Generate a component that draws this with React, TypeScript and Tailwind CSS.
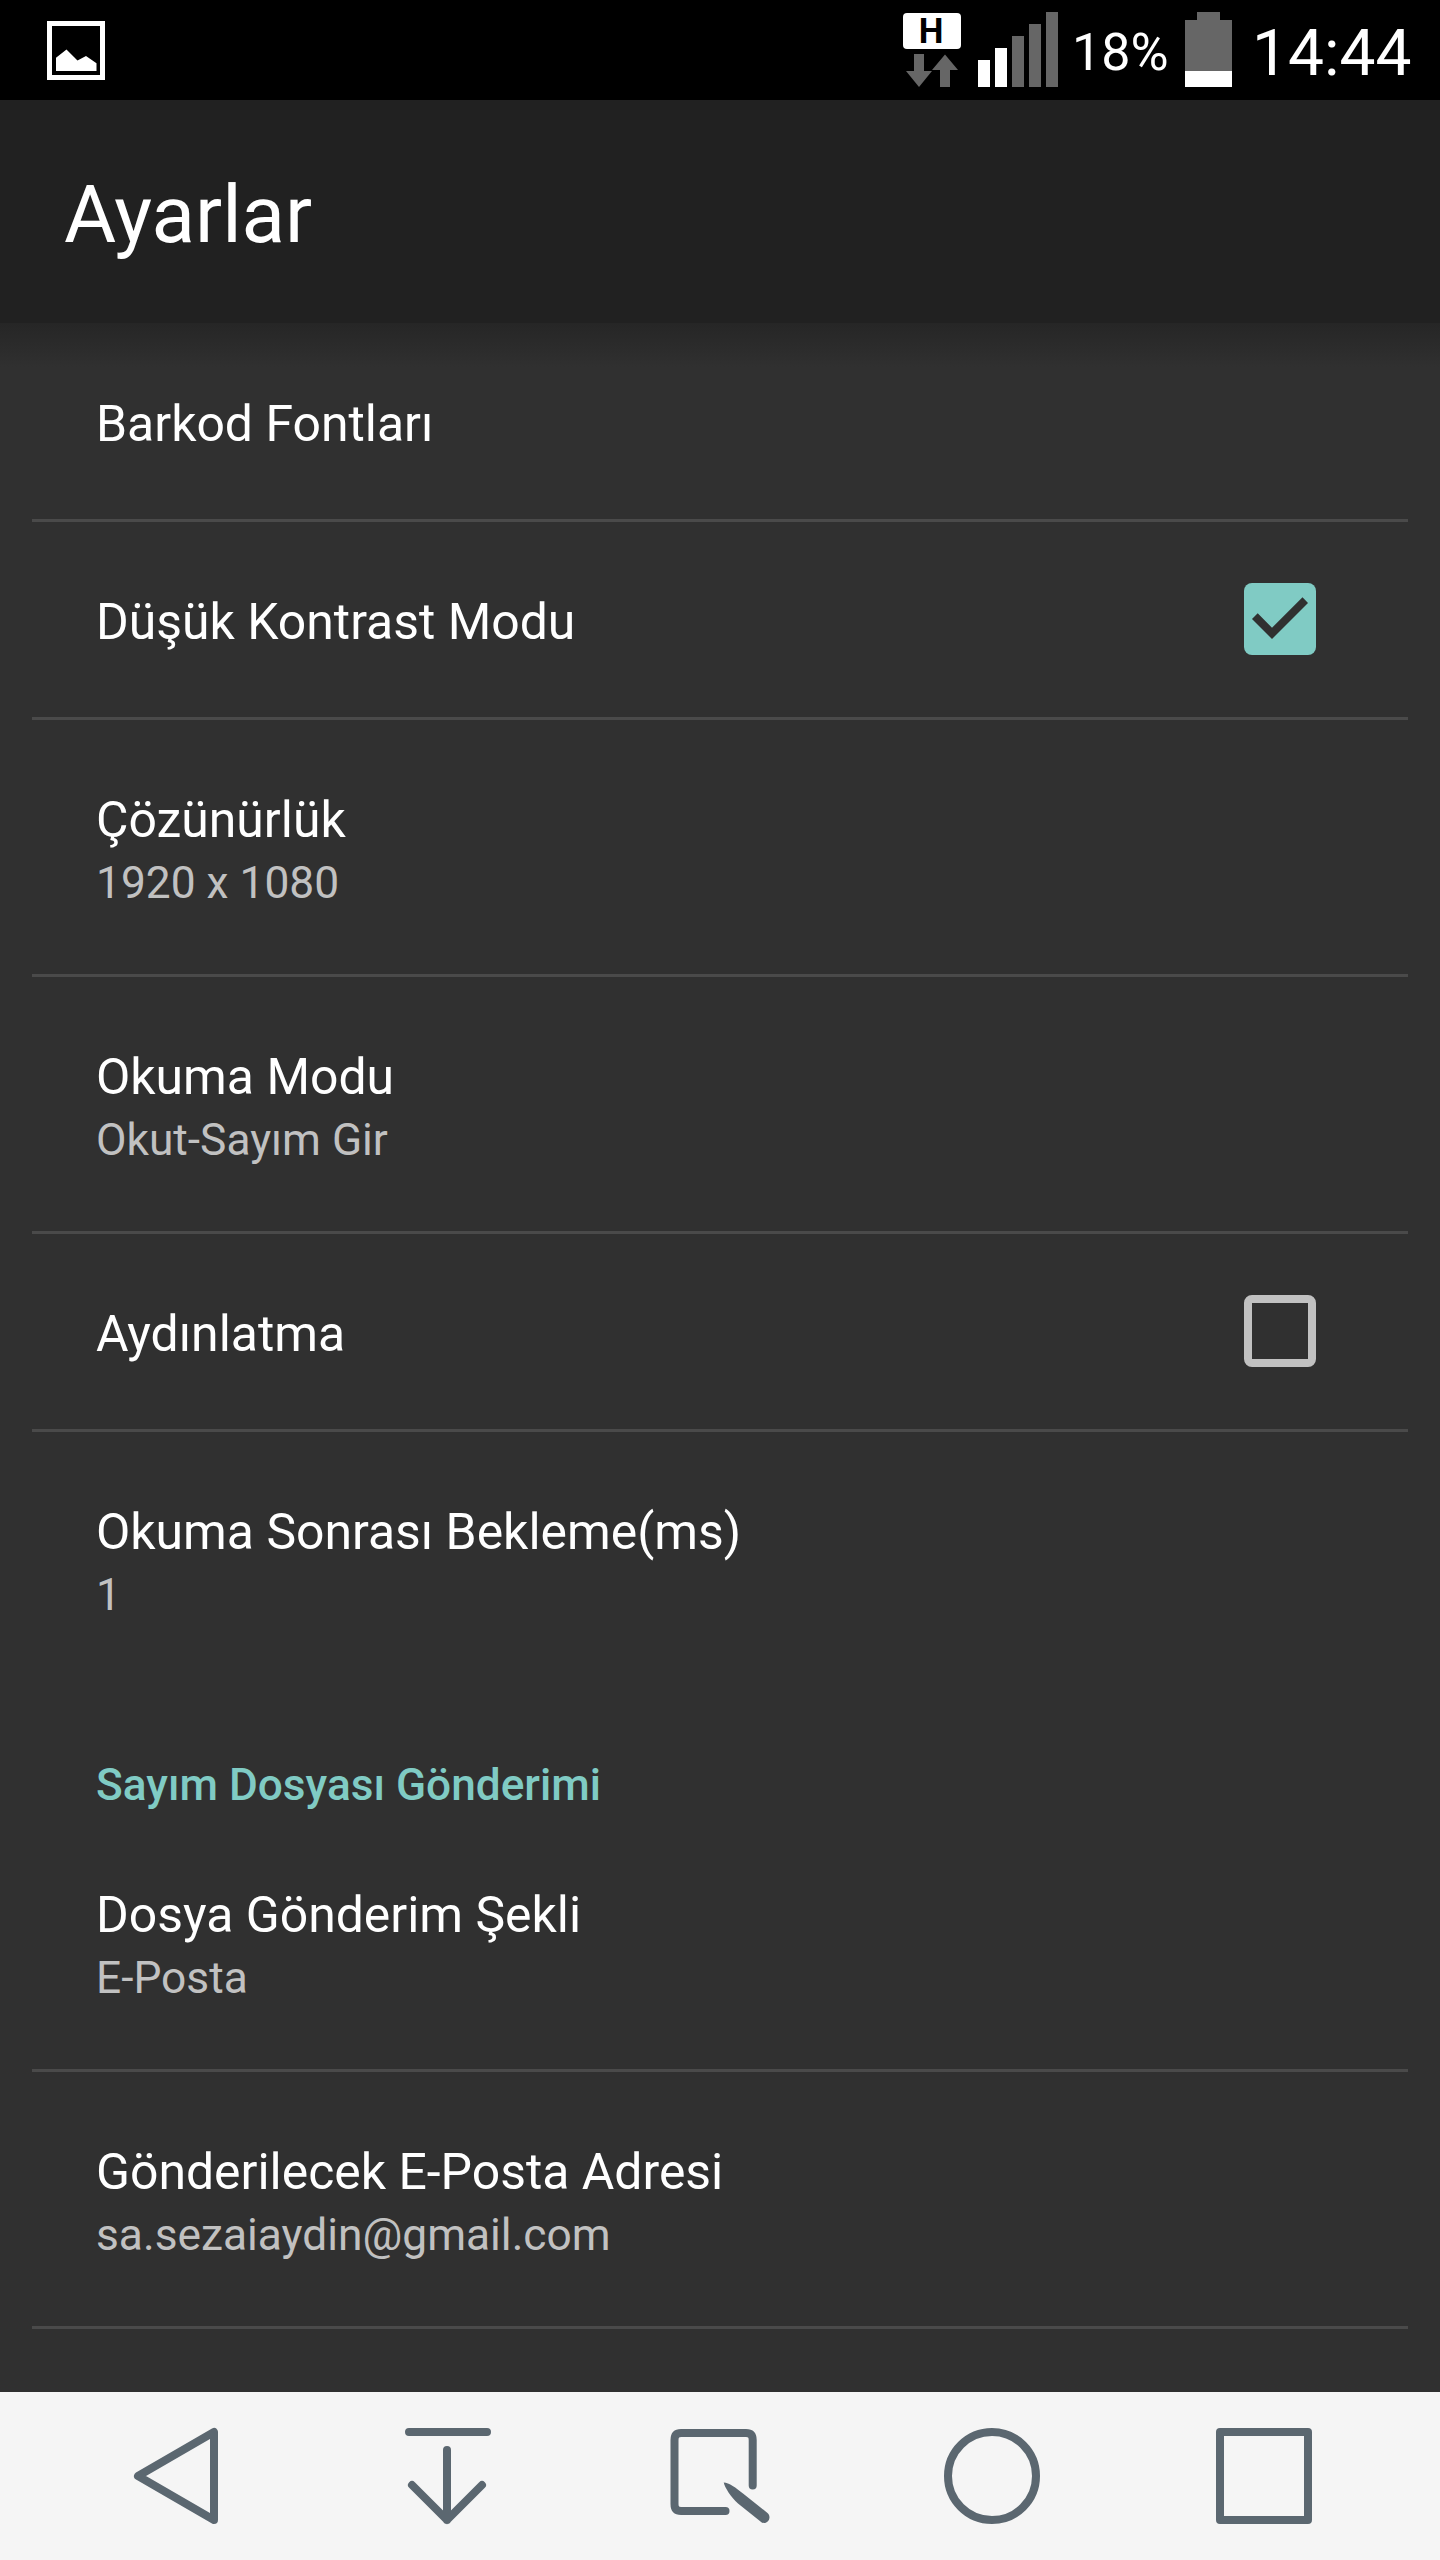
import React from "react";
import clsx from "clsx";

type Preference = {
  title: string;
  summary?: string;
  checked?: boolean;
  divider?: boolean;
};

const general: Preference[] = [
  { title: "Barkod Fontları", divider: true },
  { title: "Düşük Kontrast Modu", checked: true, divider: true },
  { title: "Çözünürlük", summary: "1920 x 1080", divider: true },
  { title: "Okuma Modu", summary: "Okut-Sayım Gir", divider: true },
  { title: "Aydınlatma", checked: false, divider: true },
  { title: "Okuma Sonrası Bekleme(ms)", summary: "1" },
];

const sending: Preference[] = [
  { title: "Dosya Gönderim Şekli", summary: "E-Posta", divider: true },
  {
    title: "Gönderilecek E-Posta Adresi",
    summary: "sa.sezaiaydin@gmail.com",
    divider: true,
  },
];

const StatusBar = () => (
  <div className="flex h-[100px] shrink-0 items-start bg-black pl-[47px] pr-[26px]">
    <svg className="mt-[21px]" width="58" height="59" viewBox="0 0 58 59">
      <rect x="2.5" y="2.5" width="53" height="54" fill="none" stroke="#fff" strokeWidth="5" />
      <path d="M9 36.7L19.5 28.5L30.5 39.5L39 35L49.5 42.3V50H9z" fill="#fff" />
    </svg>
    <div className="ml-auto flex items-start">
      <div className="mt-[13px] flex w-[58px] flex-col items-center">
        <div className="flex h-9 w-full items-center justify-center rounded-[4px] bg-white pr-[2px] pt-px text-[35px] font-bold leading-none text-black">
          H
        </div>
        <svg className="mt-[5px]" width="52" height="33" viewBox="0 0 52 33" fill="#666">
          <path d="M8 0H18V17H26L13 33L0 17H8z" />
          <path d="M39 0.5L52 16H44V33H34V16H26z" />
        </svg>
      </div>
      <div className="ml-[17px] mt-3 flex h-[75px] items-end gap-[5px]">
        <div className="h-[27px] w-3 bg-white" />
        <div className="h-[39px] w-3 bg-white" />
        <div className="h-[51px] w-3 bg-[#666]" />
        <div className="h-[63px] w-3 bg-[#666]" />
        <div className="h-[75px] w-3 bg-[#666]" />
      </div>
      <span className="ml-[14px] mt-[23px] w-[113px] whitespace-nowrap text-[52px] leading-[60px]">18%</span>
      <div className="mt-3 flex flex-col items-center">
        <div className="h-2 w-[23px] bg-[#666]" />
        <div className="h-[51px] w-[47px] bg-[#666]" />
        <div className="h-4 w-[47px] bg-white" />
      </div>
      <span className="ml-5 mt-4 w-[162px] whitespace-nowrap text-[64px] leading-[76px]">14:44</span>
    </div>
  </div>
);

const Checkbox = ({ checked }: { checked: boolean }) => (
  <div
    className={clsx(
      "mb-px size-[72px] rounded-[8px]",
      checked ? "bg-[#80cbc4]" : "border-8 border-[#c1c1c1]"
    )}
  >
    {checked && (
      <svg width="72" height="72" viewBox="0 0 72 72">
        <path d="M8 36L13.7 30.3L28 44.7L58.5 14.3L64 20L28 56z" fill="#303030" />
      </svg>
    )}
  </div>
);

const PreferenceRow = ({ title, summary, checked, divider }: Preference) => (
  <>
    <div
      className={clsx(
        "flex items-center justify-between pl-24 pr-[124px]",
        summary ? "h-[254px]" : "h-[195px]"
      )}
    >
      <div className="self-start pt-[70px]">
        <p className="text-[49.9px] leading-[60px]">{title}</p>
        {summary && <p className="mt-[7px] text-[44.3px] leading-[53px] text-[#c1c1c1]">{summary}</p>}
      </div>
      {checked !== undefined && <Checkbox checked={checked} />}
    </div>
    {divider && <div className="mx-8 h-[3px] bg-[#4a4a4a]" />}
  </>
);

const NavIcon = ({ children }: { children: React.ReactNode }) => (
  <svg
    width="96"
    height="96"
    viewBox="0 0 96 96"
    fill="none"
    stroke="#5b6770"
    strokeWidth="8"
    strokeLinecap="round"
    strokeLinejoin="round"
    className="overflow-visible"
  >
    {children}
  </svg>
);

const NavigationBar = () => (
  <nav className="flex h-[168px] shrink-0 items-center justify-between bg-[#f5f5f5] px-32">
    <NavIcon>
      <path d="M10 48L86 4V92z" />
    </NavIcon>
    <NavIcon>
      <path d="M9 4H87M47 22V92M12 57L47 92L82 57" />
    </NavIcon>
    <NavIcon>
      <path d="M53.5 83H9Q2.5 83 2.5 76V12Q2.5 5 9 5H74Q80.7 5 80.7 12V57.5" />
      <path
        d="M51.7 54.5C57 54.5 64 60 71 65.5L95.5 85C101 90 94 98.500 88.500 93.500L66 75.500C59 69 53 60 51.7 54.500z"
        fill="#5b6770"
        stroke="none"
      />
    </NavIcon>
    <NavIcon>
      <circle cx="48" cy="48" r="44" />
    </NavIcon>
    <NavIcon>
      <rect x="4" y="4" width="88" height="88" />
    </NavIcon>
  </nav>
);

const App = () => (
  <div className="flex h-[2560px] w-[1440px] flex-col overflow-hidden bg-[#303030] font-[Roboto,sans-serif] text-white">
    <StatusBar />
    <header className="flex h-[223px] shrink-0 items-center bg-[#212121] px-16">
      <h1 className="pt-1.5 text-[80px] leading-[94px]">Ayarlar</h1>
    </header>
    <main className="flex-1 bg-linear-to-b from-[#262626] to-[#303030] to-[44px] pt-px">
      {general.map((item) => (
        <PreferenceRow key={item.title} {...item} />
      ))}
      <h2 className="h-[129px] pl-24 pt-[73px] text-[44.2px] font-medium leading-[53px] text-[#80cbc4]">
        Sayım Dosyası Gönderimi
      </h2>
      {sending.map((item) => (
        <PreferenceRow key={item.title} {...item} />
      ))}
    </main>
    <NavigationBar />
  </div>
);

export default App;
